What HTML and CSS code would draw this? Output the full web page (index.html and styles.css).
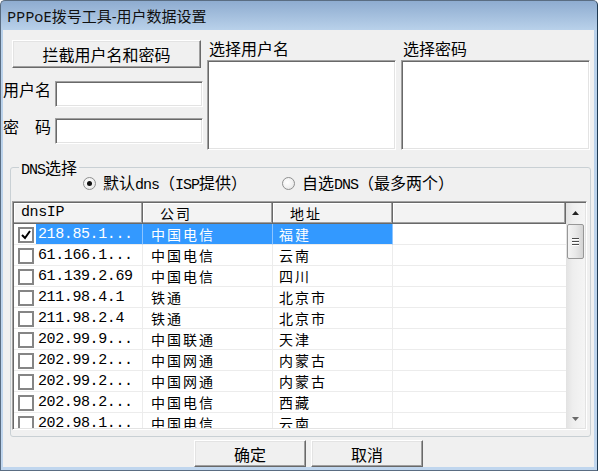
FILE: index.html
```html
<!DOCTYPE html>
<html lang="zh-CN">
<head>
<meta charset="utf-8">
<title>PPPoE拨号工具-用户数据设置</title>
<link rel="stylesheet" href="styles.css">
</head>
<body>
<div class="window">
  <div class="titlebar">PPPoE拨号工具-用户数据设置</div>
  <div class="client">
    <div class="top">
      <div class="creds">
        <button class="btn btn-intercept">拦截用户名和密码</button>
        <div class="field"><span class="lbl">用户名</span><div class="input"></div></div>
        <div class="field field-pwd"><span class="lbl">密　码</span><div class="input"></div></div>
      </div>
      <div class="picker">
        <div class="plabel">选择用户名</div>
        <div class="listbox"></div>
      </div>
      <div class="picker picker-pwd">
        <div class="plabel">选择密码</div>
        <div class="listbox"></div>
      </div>
    </div>

    <fieldset class="group">
      <legend><span class="lat">DNS</span>选择</legend>
      <div class="radios">
        <div class="radio-item radio-first"><span class="radio checked"></span><span>默认<span class="lat">dns</span>（<span class="lat">ISP</span>提供）</span></div>
        <div class="radio-item"><span class="radio"></span><span>自选<span class="lat">DNS</span>（最多两个）</span></div>
      </div>
      <div class="listview">
        <div class="lv-main">
          <div class="lv-head">
            <div class="hcell h1 mono">dnsIP</div>
            <div class="hcell h2">公司</div>
            <div class="hcell h3">地址</div>
            <div class="hcell h4"></div>
          </div>
          <div class="lv-rows">
            <div class="row sel">
              <div class="c-chk"><span class="chk"><svg viewBox="0 0 12 12" width="12" height="12"><path d="M2 6 L5 9 L10 2" fill="none" stroke="#000" stroke-width="2"/></svg></span></div>
              <div class="c-ip">218.85.1...</div><div class="c-co">中国电信</div><div class="c-addr">福建</div><div class="c-pad"></div>
            </div>
            <div class="row">
              <div class="c-chk"><span class="chk"></span></div>
              <div class="c-ip">61.166.1...</div><div class="c-co">中国电信</div><div class="c-addr">云南</div><div class="c-pad"></div>
            </div>
            <div class="row">
              <div class="c-chk"><span class="chk"></span></div>
              <div class="c-ip">61.139.2.69</div><div class="c-co">中国电信</div><div class="c-addr">四川</div><div class="c-pad"></div>
            </div>
            <div class="row">
              <div class="c-chk"><span class="chk"></span></div>
              <div class="c-ip">211.98.4.1</div><div class="c-co">铁通</div><div class="c-addr">北京市</div><div class="c-pad"></div>
            </div>
            <div class="row">
              <div class="c-chk"><span class="chk"></span></div>
              <div class="c-ip">211.98.2.4</div><div class="c-co">铁通</div><div class="c-addr">北京市</div><div class="c-pad"></div>
            </div>
            <div class="row">
              <div class="c-chk"><span class="chk"></span></div>
              <div class="c-ip">202.99.9...</div><div class="c-co">中国联通</div><div class="c-addr">天津</div><div class="c-pad"></div>
            </div>
            <div class="row">
              <div class="c-chk"><span class="chk"></span></div>
              <div class="c-ip">202.99.2...</div><div class="c-co">中国网通</div><div class="c-addr">内蒙古</div><div class="c-pad"></div>
            </div>
            <div class="row">
              <div class="c-chk"><span class="chk"></span></div>
              <div class="c-ip">202.99.2...</div><div class="c-co">中国网通</div><div class="c-addr">内蒙古</div><div class="c-pad"></div>
            </div>
            <div class="row">
              <div class="c-chk"><span class="chk"></span></div>
              <div class="c-ip">202.98.2...</div><div class="c-co">中国电信</div><div class="c-addr">西藏</div><div class="c-pad"></div>
            </div>
            <div class="row">
              <div class="c-chk"><span class="chk"></span></div>
              <div class="c-ip">202.98.1...</div><div class="c-co">中国电信</div><div class="c-addr">云南</div><div class="c-pad"></div>
            </div>
          </div>
        </div>
        <div class="sb">
          <div class="sb-btn"><svg viewBox="0 0 7 4" width="7" height="4"><path d="M0 4 L3.5 0 L7 4 Z" fill="#222"/></svg></div>
          <div class="thumb"><span class="grip"></span><span class="grip"></span><span class="grip"></span></div>
          <div class="sb-track"></div>
          <div class="sb-btn"><svg viewBox="0 0 7 4" width="7" height="4"><path d="M0 0 L7 0 L3.5 4 Z" fill="#6a6a6a"/></svg></div>
        </div>
      </div>
    </fieldset>

    <div class="actions">
      <button class="btn btn-action">确定</button>
      <button class="btn btn-action">取消</button>
    </div>
  </div>
</div>
</body>
</html>
```
FILE: styles.css
```css
html, body {
  margin: 0;
  padding: 0;
  background: #ffffff;
}

.window {
  width: 598px;
  height: 471px;
  box-sizing: border-box;
  border: 1px solid #5a6d82;
  border-right-color: #1f3a52;
  border-radius: 5px 5px 0 0;
  background: linear-gradient(#8eacd0 0, #b9d1ea 29px, #c0d6ee 100%);
  display: flex;
  flex-direction: column;
  overflow: hidden;
  font-family: "Noto Sans CJK SC", sans-serif;
  color: #000;
}

.titlebar {
  height: 29px;
  flex: none;
  box-sizing: border-box;
  padding: 2px 0 0 6px;
  display: flex;
  align-items: center;
  font-family: "Noto Sans", "Noto Sans CJK SC", sans-serif;
  font-size: 15px;
  line-height: 1;
  color: #111;
}

.client {
  flex: 1;
  margin: 0 3px 3px 2px;
  background: #f0f0f0;
  display: flex;
  flex-direction: column;
}

.lat, .mono {
  font-family: "Liberation Mono", monospace;
}
.lat {
  font-size: 15px;
  letter-spacing: -1px;
}

/* top area */
.top {
  display: flex;
  height: 120px;
  flex: none;
}

.creds {
  width: 200px;
  display: flex;
  flex-direction: column;
}

.btn {
  font-family: "Noto Sans CJK SC", sans-serif;
  font-size: 16px;
  line-height: 1;
  color: #000;
  background: #f0f0f0;
  padding: 0;
  box-sizing: border-box;
  border: 1px solid;
  border-color: #ffffff #696969 #696969 #ffffff;
  box-shadow: inset -1px -1px #a0a0a0, inset 1px 1px #e3e3e3;
}

.btn-intercept {
  margin: 10px 0 0 9px;
  width: 189px;
  height: 28px;
}

.field {
  display: flex;
  margin-top: 13px;
  height: 26px;
}
.field-pwd {
  margin-top: 11px;
}

.lbl {
  width: 52px;
  font-size: 16px;
  line-height: 20px;
  margin-top: -2px;
  white-space: pre;
}

.input,
.listbox {
  box-sizing: border-box;
  background: #ffffff;
  border: 1px solid;
  border-color: #a0a0a0 #ffffff #ffffff #a0a0a0;
  box-shadow: inset 1px 1px #696969, inset -1px -1px #e3e3e3;
}

.input {
  width: 148px;
  height: 26px;
}

.picker {
  width: 189px;
  margin-left: 4px;
}
.picker-pwd {
  margin-left: 5px;
}

.plabel {
  margin-top: 8px;
  height: 22px;
  line-height: 20px;
  padding-left: 2px;
  font-size: 16px;
}

.listbox {
  height: 90px;
}

/* group box */
.group {
  margin: 9px 0 0 7px;
  width: 581px;
  min-width: 0;
  box-sizing: border-box;
  border: 1px solid #c9d0d4;
  border-radius: 3px;
  padding: 0 0 6px 0;
}

.group legend {
  margin-left: 8px;
  padding: 0 2px;
  font-size: 16px;
  line-height: 16px;
  height: 16px;
}

.radios {
  display: flex;
  align-items: center;
  height: 17px;
  padding-left: 72px;
  font-size: 16px;
  line-height: 17px;
}

.radio-item {
  display: flex;
  align-items: center;
  gap: 7px;
}
.radio-first {
  width: 199px;
}

.radio {
  width: 13px;
  height: 13px;
  box-sizing: border-box;
  border-radius: 50%;
  border: 1px solid #8e8f8f;
  background: radial-gradient(circle at 40% 40%, #ffffff 0, #f2f2f2 50%, #dcdcdc 100%);
  display: flex;
  align-items: center;
  justify-content: center;
}
.radio.checked::after {
  content: "";
  width: 5px;
  height: 5px;
  border-radius: 50%;
  background: #111;
}

/* list view */
.listview {
  margin: 9px 0 0 1px;
  width: 575px;
  height: 229px;
  box-sizing: border-box;
  padding: 1px;
  border: 1px solid;
  border-color: #a0a0a0 #ffffff #ffffff #a0a0a0;
  box-shadow: inset 1px 1px #696969, inset -1px -1px #e3e3e3;
  background: #ffffff;
  display: flex;
}

.lv-main {
  width: 552px;
  display: flex;
  flex-direction: column;
  overflow: hidden;
}

.lv-head {
  display: flex;
  height: 21px;
  flex: none;
}

.hcell {
  box-sizing: border-box;
  height: 21px;
  background: #f3f3f3;
  border-right: 1px solid #696969;
  border-bottom: 1px solid #696969;
  box-shadow: inset -1px -1px #a0a0a0, inset 1px 1px #ffffff;
  font-size: 14px;
  letter-spacing: 2px;
  line-height: 20px;
  padding-left: 17px;
}
.hcell.mono {
  font-size: 15px;
  letter-spacing: -0.4px;
  padding-left: 7px;
}
.h1 { width: 129px; }
.h2 { width: 130px; }
.h3 { width: 120px; }
.h4 { width: 173px; }

.lv-rows {
  flex: 1;
  overflow: hidden;
}

.row {
  display: flex;
  height: 21px;
}

.row > div {
  box-sizing: border-box;
  height: 21px;
  border-bottom: 1px solid #ececec;
  line-height: 21px;
  white-space: nowrap;
}

.c-chk {
  width: 22px;
  padding: 3px 0 0 4px;
}
.chk {
  display: flex;
  align-items: center;
  justify-content: center;
  width: 16px;
  height: 16px;
  box-sizing: border-box;
  border: 2px solid #858585;
  background: #ffffff;
}

.c-ip {
  width: 107px;
  padding-left: 2px;
  font-family: "Liberation Mono", monospace;
  font-size: 15px;
  letter-spacing: -0.4px;
  border-right: 1px solid #ececec;
}
.c-co {
  width: 130px;
  padding-left: 8px;
  font-size: 14px;
  letter-spacing: 2px;
  border-right: 1px solid #ececec;
}
.c-addr {
  width: 120px;
  padding-left: 6px;
  font-size: 14px;
  letter-spacing: 2px;
  border-right: 1px solid #ececec;
}
.c-pad {
  width: 173px;
}

.row.sel .c-ip,
.row.sel .c-co,
.row.sel .c-addr {
  background: #3399ff;
  color: #ffffff;
  border-right-color: #8cc4ff;
}

/* scrollbar */
.sb {
  width: 19px;
  flex: none;
  display: flex;
  flex-direction: column;
  background: linear-gradient(to right, #e2e2e2, #eeeeee 35%, #f5f5f5);
}
.sb-btn {
  height: 19px;
  flex: none;
  display: flex;
  align-items: center;
  justify-content: center;
}
.thumb {
  margin: 2px 1px 0 1px;
  height: 35px;
  flex: none;
  box-sizing: border-box;
  border: 1px solid #979797;
  border-radius: 2px;
  background: linear-gradient(to right, #f4f4f4, #e8e8e8 50%, #d4d4d4);
  display: flex;
  flex-direction: column;
  align-items: center;
  justify-content: center;
  gap: 2px;
}
.grip {
  width: 7px;
  height: 1px;
  background: #4a4a4a;
  box-shadow: 0 1px #ffffff;
}
.sb-track {
  flex: 1;
}

/* bottom buttons */
.actions {
  display: flex;
  margin-top: 3px;
  padding-left: 191px;
  gap: 5px;
}
.btn-action {
  width: 112px;
  height: 27px;
}
```
